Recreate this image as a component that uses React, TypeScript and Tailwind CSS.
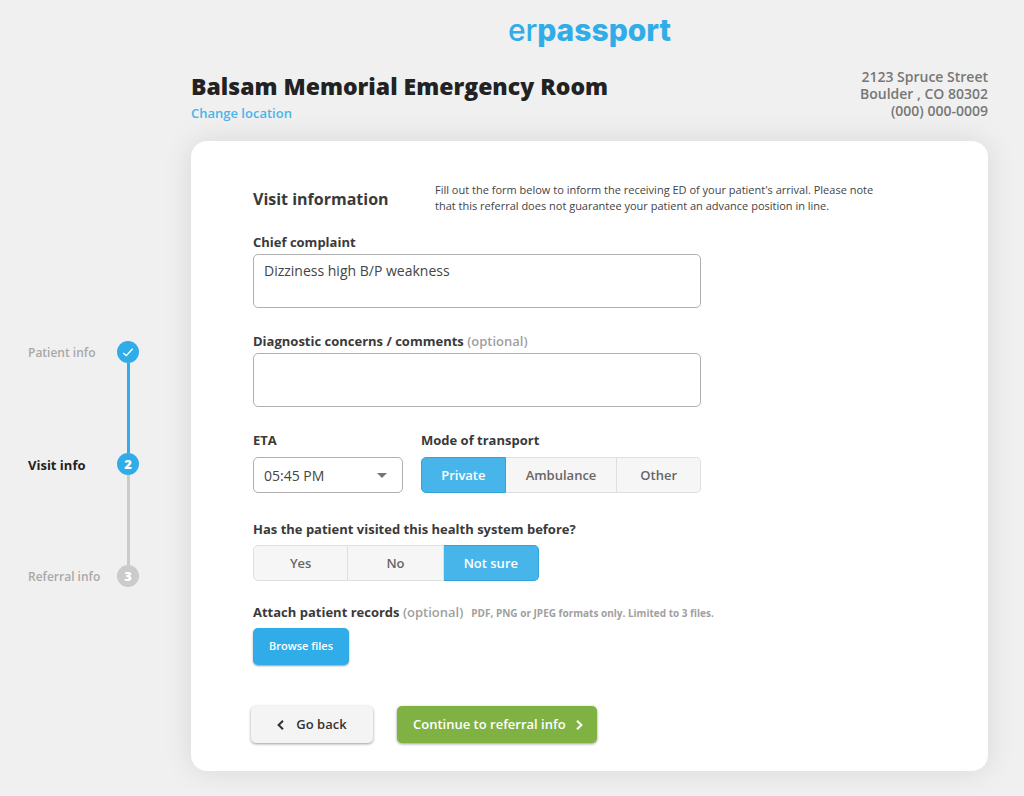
import { useRef, useState } from "react";

type StepState = "done" | "current" | "upcoming";

const steps: { label: string; state: StepState }[] = [
  { label: "Patient info", state: "done" },
  { label: "Visit info", state: "current" },
  { label: "Referral info", state: "upcoming" },
];

function Stepper() {
  return (
    <ol className="pt-[341px] pl-7 text-[12px] leading-[22px] font-semibold">
      {steps.map((step, i) => (
        <li key={step.label} className="grid grid-cols-[89px_22px]">
          <span
            className={
              "leading-6 " +
              (step.state === "current" ? "text-[13px] font-bold text-[#222]" : "text-[#a8a8a8]")
            }
          >
            {step.label}
          </span>
          <div className="flex flex-col items-center">
            <span
              className={
                "flex size-[22px] items-center justify-center rounded-full text-[13px] font-extrabold text-white " +
                (step.state === "upcoming" ? "bg-[#cbcbcb]" : "bg-[#30ade8]")
              }
            >
              {step.state === "done" ? (
                <svg viewBox="0 0 12 12" className="size-3" fill="none" stroke="currentColor" strokeWidth="1.4">
                  <path d="M1.2 7 L4.4 9.6 L10.6 2.8" />
                </svg>
              ) : (
                i + 1
              )}
            </span>
            {i < steps.length - 1 && (
              <span className={"h-[90px] w-[3px] " + (step.state === "done" ? "bg-[#30ade8]" : "bg-[#cbcbcb]")} />
            )}
          </div>
        </li>
      ))}
    </ol>
  );
}

function Segmented({
  legend,
  name,
  options,
  initial,
  columns,
  legendGap,
}: {
  legend: string;
  name: string;
  options: string[];
  initial: string;
  columns: string;
  legendGap: string;
}) {
  const [value, setValue] = useState(initial);
  return (
    <fieldset className="min-w-0">
      <legend className={"text-[13px] leading-5 font-bold " + legendGap}>{legend}</legend>
      <div className={"grid h-9 text-[13px] font-semibold " + columns}>
        {options.map((option) => (
          <label
            key={option}
            className={
              "relative flex cursor-pointer items-center justify-center border pt-0.5 first:rounded-l-[5px] last:rounded-r-[5px] not-first:border-l-0 " +
              (option === value
                ? "border-[#30a3da] bg-[#48b5ea] text-white"
                : "border-[#dfdfdf] bg-[#f6f6f6] text-[#666]")
            }
          >
            <input
              type="radio"
              name={name}
              value={option}
              checked={option === value}
              onChange={() => setValue(option)}
              className="sr-only"
            />
            {option}
          </label>
        ))}
      </div>
    </fieldset>
  );
}

const fieldClass =
  "block h-[54px] w-full resize-none rounded-[5px] border border-[#b0b0b0] bg-white px-2.5 py-1.5 text-[14px] leading-5 text-[#444] outline-none";

export default function App() {
  const fileInput = useRef<HTMLInputElement>(null);
  return (
    <div className="grid min-h-screen grid-cols-[191px_minmax(0,1fr)] overflow-hidden bg-[#f0f0f0] font-['Open_Sans',sans-serif] text-[#3a3a3a]">
      <Stepper />
      <div className="pr-9 pb-6">
        <header>
          <div className="flex justify-center pt-3 font-['Inter',sans-serif] text-[30px] leading-9 text-[#30ade8]">
            <span className="font-medium">er</span>
            <span className="font-extrabold">passport</span>
          </div>
          <div className="mt-5 flex h-[73px] items-start justify-between">
            <div>
              <h1 className="text-[23px] leading-9 font-extrabold text-[#222]">Balsam Memorial Emergency Room</h1>
              <a href="#location" className="block text-[13px] leading-[18px] font-semibold text-[#48b5ea]">
                Change location
              </a>
            </div>
            <address className="text-right text-[14px] leading-[17px] font-semibold text-[#777] not-italic">
              2123 Spruce Street
              <br />
              Boulder , CO 80302
              <br />
              (000) 000-0009
            </address>
          </div>
        </header>

        <main className="rounded-2xl bg-white px-[62px] pt-[41px] pb-7 shadow-[0_0_30px_rgba(0,0,0,0.1)]">
          <form onSubmit={(e) => e.preventDefault()}>
            <div className="flex">
              <h2 className="w-[182px] shrink-0 text-[16px] leading-[34px] font-bold">Visit information</h2>
              <p className="max-w-[440px] text-[11px] leading-4 text-[#444]">
                Fill out the form below to inform the receiving ED of your patient's arrival. Please note that this
                referral does not guarantee your patient an advance position in line.
              </p>
            </div>

            <div className="max-w-[448px]">
              <label htmlFor="complaint" className="mt-4 mb-0.5 block text-[13px] leading-5 font-bold">
                Chief complaint
              </label>
              <textarea id="complaint" className={fieldClass} defaultValue="Dizziness high B/P weakness" />

              <label htmlFor="comments" className="mt-[23px] mb-0.5 block text-[13px] leading-5 font-bold">
                Diagnostic concerns / comments <span className="font-semibold text-[#a0a0a0]">(optional)</span>
              </label>
              <textarea id="comments" className={fieldClass} />

              <div className="mt-[23px] grid grid-cols-[150px_minmax(0,1fr)] gap-[18px]">
                <div>
                  <label htmlFor="eta" className="mb-[7px] block text-[13px] leading-5 font-bold">
                    ETA
                  </label>
                  <div className="relative">
                    <select
                      id="eta"
                      className="block h-9 w-full appearance-none rounded-[5px] border border-[#b0b0b0] bg-white px-2.5 text-[14px] text-[#444] outline-none"
                    >
                      <option>05:45 PM</option>
                      <option>06:00 PM</option>
                      <option>06:15 PM</option>
                    </select>
                    <svg
                      viewBox="0 0 10 5"
                      className="pointer-events-none absolute top-4 right-4 h-[5px] w-2.5 fill-[#757575]"
                    >
                      <path d="M0 0h10L5 5z" />
                    </svg>
                  </div>
                </div>
                <Segmented
                  legend="Mode of transport"
                  name="transport"
                  options={["Private", "Ambulance", "Other"]}
                  initial="Private"
                  columns="grid-cols-[85fr_112fr_84fr]"
                  legendGap="mb-[7px]"
                />
              </div>

              <div className="mt-[26px]">
                <Segmented
                  legend="Has the patient visited this health system before?"
                  name="visited"
                  options={["Yes", "No", "Not sure"]}
                  initial="Not sure"
                  columns="max-w-[286px] grid-cols-3"
                  legendGap="mb-1.5"
                />
              </div>
            </div>

            <div className="mt-[21px] flex items-baseline leading-5">
              <label htmlFor="records" className="text-[13px] font-bold">
                Attach patient records <span className="font-semibold text-[#a0a0a0]">(optional)</span>
              </label>
              <span className="ml-2 text-[10px] font-bold text-[#a0a0a0]">
                PDF, PNG or JPEG formats only. Limited to 3 files.
              </span>
            </div>
            <input ref={fileInput} id="records" type="file" multiple accept=".pdf,.png,.jpeg" className="hidden" />
            <button
              type="button"
              onClick={() => fileInput.current?.click()}
              className="mt-[5px] block h-[37px] rounded-[5px] bg-[#30ade8] px-4 text-[11px] font-semibold text-white shadow-[0_1px_2px_rgba(0,0,0,0.4)]"
            >
              Browse files
            </button>

            <div className="mt-[41px] -ml-0.5 flex gap-6 text-[13px] font-semibold">
              <button
                type="button"
                className="flex h-[37px] w-[122px] items-center justify-center gap-3 rounded-[5px] bg-[#f4f4f4] text-[#333] shadow-[0_1px_3px_rgba(0,0,0,0.4)]"
              >
                <svg viewBox="0 0 7 10" className="h-2.5 w-[7px]" fill="none" stroke="currentColor" strokeWidth="2">
                  <path d="M6 0.8 L1.6 5 L6 9.2" />
                </svg>
                Go back
              </button>
              <button
                type="submit"
                className="flex h-[37px] items-center gap-2.5 rounded-[5px] bg-[#80b243] pr-3.5 pl-4 text-white shadow-[0_1px_3px_rgba(0,0,0,0.4)]"
              >
                Continue to referral info
                <svg viewBox="0 0 7 10" className="h-2.5 w-[7px]" fill="none" stroke="currentColor" strokeWidth="2">
                  <path d="M1 0.8 L5.4 5 L1 9.2" />
                </svg>
              </button>
            </div>
          </form>
        </main>
      </div>
    </div>
  );
}
